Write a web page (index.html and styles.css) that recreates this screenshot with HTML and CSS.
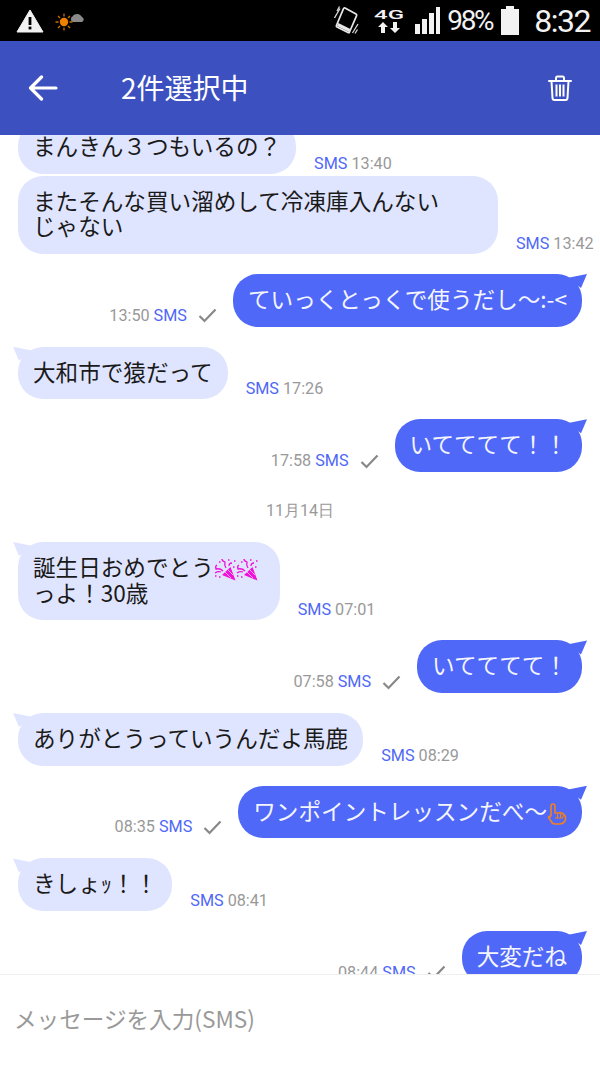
FILE: index.html
```html
<!DOCTYPE html>
<html lang="ja">
<head>
  <meta charset="UTF-8" />
  <meta name="viewport" content="width=device-width, initial-scale=1.0"/>
  <title>SMS</title>
  <link rel="stylesheet" href="styles.css">
</head>
<body>
  <div class="app">

    <div class="status-bar">
      <div class="status-left">
        <svg class="warn-icon" width="28" height="24" viewBox="0 0 28 24">
          <path d="M14 1 L27 23 L1 23 Z" fill="#f2f2f2" stroke="#f2f2f2" stroke-linejoin="round"/>
          <rect x="12.6" y="8" width="2.8" height="8" fill="#000"/>
          <rect x="12.6" y="17.6" width="2.8" height="2.8" fill="#000"/>
        </svg>
        <svg class="weather-icon" width="30" height="20" viewBox="0 0 30 20">
          <path d="M18 10 a3 3 0 0 1 -.5 -5.500 a5.500 5.500 0 0 1 9.500 .5 a2.700 2.700 0 0 1 0 5 z" fill="#8a8a8a"/>
          <circle cx="9" cy="10" r="4.200" fill="#f08000"/>
          <path d="M9 1.500v3M9 15.500v3M.5 10h3M14.500 10h3M3 4l2 2M13 14l2 2M3 16l2-2M13 6l2-2" stroke="#c87000" stroke-width="1.300"/>
        </svg>
      </div>
      <div class="status-right">
        <svg class="vibrate-icon" width="25" height="29" viewBox="0 0 25 29">
          <path d="M11 2 L22 8 Q23 8.700 22.600 9.700 L15.500 26 Q15 27 14 26.500 L3 21 Q2 20.500 2.400 19.500 L9.500 2.700 Q10 1.500 11 2 Z" fill="none" stroke="#e8e8e8" stroke-width="1.700"/>
          <path d="M3 20 L15 26 L16.300 23 L4.300 17 Z" fill="#e8e8e8"/>
          <path d="M.5 12 L6 2.500 M3 5 L5.500 .5 M18.500 27 L24 18 M21 27.500 L23.500 23.500" stroke="#d8d8d8" stroke-width="1.300"/>
        </svg>
        <div class="network">
          <span class="network-label">4G</span>
          <svg width="22" height="11" viewBox="0 0 22 11">
            <path d="M5 0 L10 5 H7 V11 H3 V5 H0 Z M17 11 L12 6 H15 V0 H19 V6 H22 Z" fill="#f2f2f2"/>
          </svg>
        </div>
        <svg class="signal-icon" width="25" height="27" viewBox="0 0 25 27">
          <rect x="0" y="17" width="5" height="10" fill="#f2f2f2"/>
          <rect x="7" y="12" width="5" height="15" fill="#f2f2f2"/>
          <rect x="14" y="6" width="5" height="21" fill="#f2f2f2"/>
          <rect x="21" y="0" width="4" height="27" fill="#f2f2f2"/>
        </svg>
        <span class="battery-text">98%</span>
        <svg class="battery-icon" width="18" height="29" viewBox="0 0 18 29">
          <path d="M5 0 H13 V3 H18 V29 H0 V3 H5 Z" fill="#f2f2f2"/>
        </svg>
        <span class="clock">8:32</span>
      </div>
    </div>

    <header class="app-header">
      <svg class="back-icon" width="30" height="26" viewBox="0 0 30 26">
        <path d="M28 13 H3 M13.500 2 L2.500 13 L13.500 24" fill="none" stroke="#fff" stroke-width="3.200" stroke-linecap="round" stroke-linejoin="round"/>
      </svg>
      <h1 class="app-title">2件選択中</h1>
      <svg class="trash-icon" width="24" height="26" viewBox="0 0 24 26">
        <path d="M1 6 H23 M8 6 V3 Q8 1.500 9.500 1.500 H14.500 Q16 1.500 16 3 V6" fill="none" stroke="#fff" stroke-width="2" stroke-linecap="round"/>
        <path d="M3.500 6 L4.500 23 Q4.600 25 6.500 25 H17.500 Q19.400 25 19.500 23 L20.500 6" fill="none" stroke="#fff" stroke-width="2"/>
        <path d="M8.500 9.500 V21.500 M12 9.500 V21.500 M15.500 9.500 V21.500" stroke="#fff" stroke-width="2"/>
      </svg>
    </header>

    <div class="message-list">
      <div class="messages">

        <div class="row in first">
          <div class="bubble">まんきん３つもいるの？</div>
          <div class="meta"><span class="sms">SMS</span><span>13:40</span></div>
        </div>

        <div class="row in next">
          <div class="bubble wrap">またそんな買い溜めして冷凍庫入んないじゃない</div>
          <div class="meta"><span class="sms">SMS</span><span>13:42</span></div>
        </div>

        <div class="row out">
          <div class="meta"><span>13:50</span><span class="sms">SMS</span>
            <svg class="check" width="19" height="15" viewBox="0 0 19 15"><path d="M1.500 8 L6.500 13 L17.500 1.500" fill="none" stroke="#888" stroke-width="2.200"/></svg>
          </div>
          <div class="bubble tail">ていっくとっくで使うだし〜:-&lt;</div>
        </div>

        <div class="row in">
          <div class="bubble tail">大和市で猿だって</div>
          <div class="meta"><span class="sms">SMS</span><span>17:26</span></div>
        </div>

        <div class="row out">
          <div class="meta"><span>17:58</span><span class="sms">SMS</span>
            <svg class="check" width="19" height="15" viewBox="0 0 19 15"><path d="M1.500 8 L6.500 13 L17.500 1.500" fill="none" stroke="#888" stroke-width="2.200"/></svg>
          </div>
          <div class="bubble tail">いてててて！！</div>
        </div>

        <div class="date">11月14日</div>

        <div class="row in">
          <div class="bubble tail birthday">誕生日おめでとう<svg class="emoji" width="22" height="22" viewBox="0 0 22 22"><use href="#popper"/></svg><svg class="emoji" width="22" height="22" viewBox="0 0 22 22"><use href="#popper"/></svg><br>っよ！30歳</div>
          <div class="meta"><span class="sms">SMS</span><span>07:01</span></div>
        </div>

        <div class="row out">
          <div class="meta"><span>07:58</span><span class="sms">SMS</span>
            <svg class="check" width="19" height="15" viewBox="0 0 19 15"><path d="M1.500 8 L6.500 13 L17.500 1.500" fill="none" stroke="#888" stroke-width="2.200"/></svg>
          </div>
          <div class="bubble tail">いてててて！</div>
        </div>

        <div class="row in">
          <div class="bubble tail">ありがとうっていうんだよ馬鹿</div>
          <div class="meta"><span class="sms">SMS</span><span>08:29</span></div>
        </div>

        <div class="row out">
          <div class="meta"><span>08:35</span><span class="sms">SMS</span>
            <svg class="check" width="19" height="15" viewBox="0 0 19 15"><path d="M1.500 8 L6.500 13 L17.500 1.500" fill="none" stroke="#888" stroke-width="2.200"/></svg>
          </div>
          <div class="bubble tail">ワンポイントレッスンだべ〜<svg class="emoji" width="20" height="22" viewBox="0 0 20 22">
            <path d="M4 13 V3 Q4 1 6 1 Q8 1 8 3 V10 L12 10 Q13.500 9 14.500 10.500 Q16.500 10 17 12 Q19 13 18.500 16 Q17.500 21 12 21 H8 Q5 21 4 18 L1.500 14.500 Q2 12.500 4 14" fill="none" stroke="#f08020" stroke-width="1.600" stroke-linejoin="round"/>
            <path d="M10.500 11 V14.500 M13.500 11 V14.500 M16 12.500 V14.500 M8 15 H16" stroke="#f08020" stroke-width="1.200" fill="none"/>
          </svg></div>
        </div>

        <div class="row in">
          <div class="bubble tail">きしょｯ！！</div>
          <div class="meta"><span class="sms">SMS</span><span>08:41</span></div>
        </div>

        <div class="row out">
          <div class="meta"><span>08:44</span><span class="sms">SMS</span>
            <svg class="check" width="19" height="15" viewBox="0 0 19 15"><path d="M1.500 8 L6.500 13 L17.500 1.500" fill="none" stroke="#888" stroke-width="2.200"/></svg>
          </div>
          <div class="bubble tail">大変だね</div>
        </div>

      </div>
    </div>

    <div class="input-bar">メッセージを入力(SMS)</div>
  </div>

  <svg width="0" height="0" class="defs">
    <defs>
      <g id="popper">
        <path d="M21.500 21.500 L8 16 L16.500 8 Z" fill="#f010d8"/>
        <path d="M11 13 L17 19 M14 11 L19 16" stroke="#f7a8f0" stroke-width="1"/>
        <path d="M9 12 Q6 9 2 10 Q1 7 3 6 M12 9 Q10 6 11 3 Q8 2 8 0 M15 7 Q15 4 18 4 M7 13 Q4 12 1 14" fill="none" stroke="#f010d8" stroke-width="1.300"/>
        <path d="M5 3h1.500M14 1h1.500M19 8h1.500M5 18h1.500M1 17h1.500M20 2h1.500" stroke="#f010d8" stroke-width="1.500"/>
      </g>
    </defs>
  </svg>
</body>
</html>
```
FILE: styles.css
```css
body {
  margin: 0;
  background: #fff;
  color: #1a1a1a;
  font-family: "Noto Sans CJK JP", "Noto Sans", sans-serif;
}
.app {
  height: 1067px;
  display: flex;
  flex-direction: column;
  overflow: hidden;
}
.defs {
  position: absolute;
}

/* status bar */
.status-bar {
  height: 41px;
  background: #000;
  display: flex;
  justify-content: space-between;
  align-items: center;
  padding: 0 10px 0 16px;
  flex-shrink: 0;
}
.status-left {
  display: flex;
  align-items: center;
  gap: 11px;
}
.weather-icon {
  margin-top: 3px;
}
.status-right {
  display: flex;
  align-items: center;
  color: #f2f2f2;
  font-family: Roboto, sans-serif;
}
.vibrate-icon {
  margin-right: 14px;
}
.network {
  display: flex;
  flex-direction: column;
  align-items: center;
  width: 32px;
  margin-right: 10px;
}
.network-label {
  font-family: Roboto, sans-serif;
  font-weight: 500;
  font-size: 13px;
  line-height: 14px;
  transform: scaleX(1.850);
}
.signal-icon {
  margin-right: 7px;
}
.battery-text {
  font-size: 28px;
  letter-spacing: -2.300px;
  margin-right: 9px;
}
.battery-icon {
  margin-right: 15px;
}
.clock {
  font-size: 32px;
  letter-spacing: -1.500px;
}

/* header */
.app-header {
  height: 94px;
  background: #3c50c0;
  display: flex;
  align-items: center;
  padding: 0 28px;
  flex-shrink: 0;
}
.back-icon {
  margin-right: 63px;
}
.app-title {
  flex: 1;
  margin: 0 0 2px;
  color: #fff;
  font-size: 28px;
  font-weight: 400;
}

/* messages */
.message-list {
  flex: 1;
  overflow: hidden;
  min-height: 0;
}
.messages {
  margin-top: -14px;
  display: flex;
  flex-direction: column;
}
.row {
  display: flex;
  align-items: flex-end;
  gap: 18px;
  padding: 0 18px;
  margin-top: 20px;
}
.row.first {
  margin-top: 0;
}
.row.next {
  margin-top: 2px;
}
.row.out {
  justify-content: flex-end;
  gap: 16px;
}
.bubble {
  position: relative;
  flex-shrink: 0;
  padding: 12px 15px 15px 15px;
  font-size: 22.600px;
  line-height: 25.670px;
  border-radius: 25px;
  background: #e0e5ff;
  color: #1a1a1a;
}
.bubble.wrap {
  width: 420px;
  padding-right: 45px;
}
.bubble.birthday {
  padding-right: 22px;
}
.out .bubble {
  background: #4f68f7;
  color: #f4f5ff;
}
.bubble.tail::before {
  content: "";
  position: absolute;
  top: 0;
  width: 20px;
  height: 15px;
}
.in .bubble.tail::before {
  left: -5px;
  background: #e0e5ff;
  clip-path: polygon(0 0, 20px 4px, 6px 14px);
}
.out .bubble.tail::before {
  right: -5px;
  background: #4f68f7;
  clip-path: polygon(100% 0, 0 4px, 14px 14px);
}
.emoji {
  vertical-align: -3px;
  margin: -2px 0;
}
.meta {
  display: flex;
  align-items: center;
  gap: 4px;
  font-family: Roboto, sans-serif;
  font-size: 16.200px;
  line-height: 20px;
  color: #999;
  margin-bottom: 1px;
  white-space: nowrap;
}
.in .meta {
  margin-bottom: 0;
}
.sms {
  color: #4f68f7;
}
.check {
  margin-left: 7px;
}
.date {
  margin-top: 29px;
  margin-bottom: 1px;
  text-align: center;
  font-family: Roboto, sans-serif;
  font-size: 16px;
  line-height: 20px;
  color: #999;
}

/* input */
.input-bar {
  height: 87px;
  border-top: 1px solid #eee;
  background: #fff;
  display: flex;
  align-items: center;
  padding: 0 0 5px 14px;
  font-size: 22.600px;
  color: #999;
  flex-shrink: 0;
}
```
